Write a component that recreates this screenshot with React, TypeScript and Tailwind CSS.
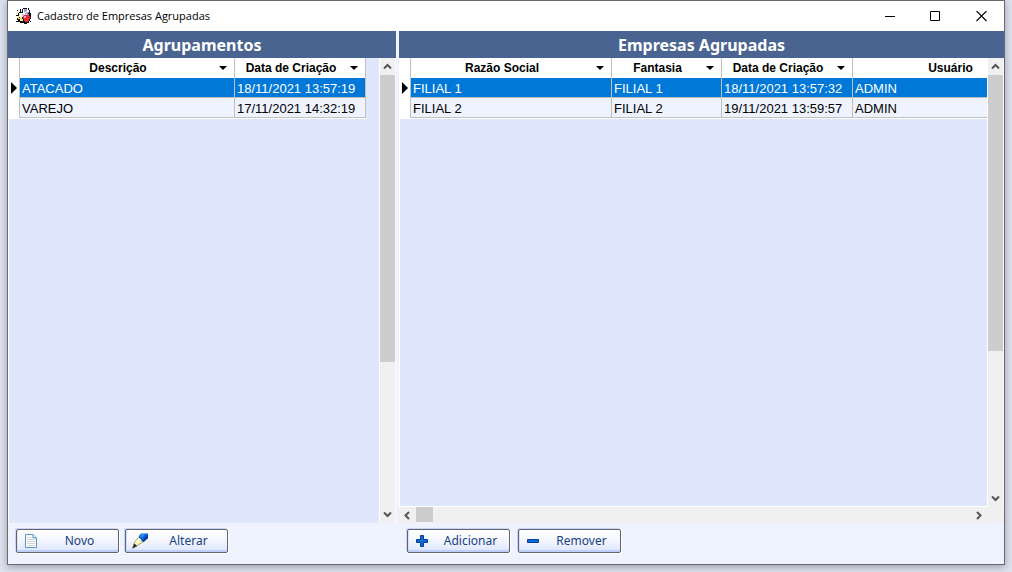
import type { ReactNode } from "react";

type Column = { label: string; width: number; sortable?: boolean };

type GridProps = { columns: Column[]; rows: string[][]; label: string };

function Grid({ columns, rows, label }: GridProps) {
  const total = 11 + columns.reduce((sum, c) => sum + c.width, 0);
  return (
    <table
      aria-label={label}
      className="table-fixed border-separate border-spacing-0 border-b border-white text-[13px] leading-4"
      style={{ width: total }}
    >
      <colgroup>
        <col style={{ width: 11 }} />
        {columns.map((c) => (
          <col key={c.label} style={{ width: c.width }} />
        ))}
      </colgroup>
      <thead>
        <tr className="h-5 bg-white text-xs">
          <td className="border-r border-[#c0c0c0] p-0" />
          {columns.map((c) => (
            <th key={c.label} scope="col" className="border-r border-[#c0c0c0] p-0 font-bold">
              <div className="flex h-5 items-center pr-1">
                <span className="flex-1 text-center">{c.label}</span>
                <span className="flex w-3.5 justify-center">
                  {c.sortable !== false && (
                    <svg width="8" height="4" viewBox="0 0 8 4" aria-hidden="true">
                      <path d="M0 0h8L4 4z" />
                    </svg>
                  )}
                </span>
              </div>
            </th>
          ))}
        </tr>
      </thead>
      <tbody>
        {rows.map((row, i) => (
          <tr key={row[0]} className="h-5">
            <td className="border-r border-[#c0c0c0] bg-white p-0">
              {i === 0 && (
                <svg className="ml-0.5 block" width="6" height="12" viewBox="0 0 6 12" aria-hidden="true">
                  <path d="M0 0l6 6L0 12z" />
                </svg>
              )}
            </td>
            {row.map((cell, j) => (
              <td
                key={j}
                className={
                  i === 0
                    ? "border-r border-b border-[#c0c0c0] bg-[#0078d7] p-0 pt-0.5 pl-px whitespace-nowrap text-white first-of-type:border-l"
                    : "border-r border-b border-[#c0c0c0] bg-[#eff3ff] p-0 pt-0.5 pl-px whitespace-nowrap text-black"
                }
              >
                <span className="pl-px">{cell}</span>
              </td>
            ))}
          </tr>
        ))}
      </tbody>
    </table>
  );
}

function Chevron({ d }: { d: string }) {
  return (
    <svg width="9" height="9" viewBox="0 0 9 9" fill="none" stroke="#555" strokeWidth="2" aria-hidden="true">
      <path d={d} />
    </svg>
  );
}

function VerticalScroll({ thumb }: { thumb: string }) {
  return (
    <div className="flex w-4 shrink-0 flex-col border-r border-[#f8faff] bg-[#f0f0f0]">
      <button type="button" aria-label="Rolar para cima" className="flex h-[17px] items-center justify-center">
        <Chevron d="M1 6.5L4.5 3 8 6.5" />
      </button>
      <div className="min-h-0 flex-1">
        <div className="bg-[#cdcdcd]" style={{ height: thumb }} />
      </div>
      <button type="button" aria-label="Rolar para baixo" className="flex h-[17px] items-center justify-center">
        <Chevron d="M1 2.5L4.5 6 8 2.5" />
      </button>
    </div>
  );
}

function HorizontalScroll() {
  return (
    <div className="flex h-4 shrink-0 bg-[#f0f0f0] pr-4">
      <button type="button" aria-label="Rolar para a esquerda" className="flex w-[17px] items-center justify-center">
        <Chevron d="M6 1L2.500 4.500 6 8" />
      </button>
      <div className="flex-1">
        <div className="h-[15px] w-[17px] bg-[#cdcdcd]" />
      </div>
      <button type="button" aria-label="Rolar para a direita" className="flex w-[17px] items-center justify-center">
        <Chevron d="M2 1l3.500 3.500L2 8" />
      </button>
    </div>
  );
}

function PanelTitle({ children }: { children: ReactNode }) {
  return (
    <h2 className="h-[27px] shrink-0 bg-[#4a6492] text-center font-['Noto_Sans',sans-serif] text-base leading-7 font-bold text-white">
      {children}
    </h2>
  );
}

function ActionButton({ icon, children }: { icon: ReactNode; children: ReactNode }) {
  return (
    <button
      type="button"
      className="flex h-6 w-[103px] items-center rounded-xs border border-[#63636b] bg-linear-to-b from-white via-[#f3f6ff] to-[#dce5ff] pl-1.5 font-['Noto_Sans',sans-serif] text-xs leading-4 text-[#17407f] shadow-[inset_0_-2px_0_#c0cffa,inset_1px_0_0_#d6e0ff,-1px_-1px_0_#c9d4f8,1px_1px_0_#ffffff]"
    >
      <span className="flex w-4 shrink-0 justify-center">{icon}</span>
      <span className="flex-1 pl-0.5 text-center">{children}</span>
    </button>
  );
}

function AppIcon() {
  return (
    <svg width="16" height="16" viewBox="0 0 16 16" shapeRendering="crispEdges" aria-hidden="true">
      <path fill="#111" d="M1 2h1v1H1zM4 1h1v3H4zM7 0h4v1H7zM6 1h1v3H6zM12 0h1v2h-1zM13 2h1v3h1v6h-1v2h-1v2h-2v1H8v-1H4v-1H2v-2H1v-2h1V8H0V7h2V5h1V4h10z" />
      <path fill="#f4e65c" d="M3 5h3v2H3zM2 8h2v3H2zM4 10h3v3H4zM1 4h1v1H1z" />
      <path fill="#fff" d="M4 5h3v5H4zM7 3h2v4H7zM3 7h2v2H3zM5 12h2v1H5z" />
      <path fill="#9298d8" d="M8 1h3v3H8zM10 4h3v3h-3z" />
      <path fill="#c8c8d0" d="M9 3h2v4H9zM6 6h2v2H6z" />
      <path fill="#e62c3c" d="M8 7h5v1h1v3h-1v2h-1v1H9v-1H8v-2H7V8h1z" />
      <path fill="#ff9aa0" d="M8 8h2v2H8z" />
      <path fill="#111" d="M12 5h1v1h-1zM6 9h1v2H6zM3 9h1v1H3zM0 13h2v1H0zM14 13h1v1h-1z" />
    </svg>
  );
}

function PageIcon() {
  return (
    <svg width="12" height="14" viewBox="0 0 12 14" aria-hidden="true">
      <path fill="#fff" stroke="#5594ca" d="M.5.500h7.500l3.500 3.500v9.500H.5z" />
      <path fill="#d5e9fa" stroke="#5594ca" d="M8 .500v3.500h3.500" />
      <path stroke="#d4d4d8" d="M2 3.500h4M2 5.500h7M2 7.500h8M2 9.500h8M2 11.500h8" />
    </svg>
  );
}

function PencilIcon() {
  return (
    <svg width="16" height="16" viewBox="0 0 16 16" aria-hidden="true">
      <path fill="#f7f3a5" stroke="#77733d" strokeWidth=".6" d="M7 3.500L2.500 9.500.8 15l5-2.800L12.500 8z" />
      <path fill="#fffde0" d="M7 5l2 1.500-5 5L3 10z" />
      <path fill="#333" d="M2 10.800L.3 15.700l4.700-2.500-1.200-1.700z" />
      <path fill="#0a62d8" d="M7 3l2-2.500h7V5l-4.500 4-2-1-.5-2-2-1z" />
      <path fill="#2d92ef" d="M8 3.500L9.500 1H13l-2.500 3.500z" />
      <path fill="#063a98" d="M12.500 5L16 2v3l-4.500 4-1-1z" />
    </svg>
  );
}

export default function App() {
  return (
    <div className="flex h-screen flex-col bg-[#dfe2ef] px-[7px] pb-[7px] font-['Liberation_Sans',Arial,sans-serif] text-black">
      <div className="flex min-h-0 flex-1 flex-col border border-[#686870] bg-[#eff3ff] shadow-[0_2px_8px_rgba(50,50,70,0.4)]">
        <header className="flex h-[30px] shrink-0 items-center bg-white pl-2">
          <AppIcon />
          <h1 className="flex-1 pl-[5px] font-['Open_Sans','Noto_Sans',sans-serif] text-[11px]">
            Cadastro de Empresas Agrupadas
          </h1>
          <button type="button" aria-label="Minimizar" className="flex h-full w-[46px] items-center justify-center">
            <svg width="11" height="11" viewBox="0 0 11 11" aria-hidden="true">
              <path stroke="#000" d="M1 5.500h10" />
            </svg>
          </button>
          <button type="button" aria-label="Maximizar" className="flex h-full w-[46px] items-center justify-center">
            <svg width="11" height="11" viewBox="0 0 11 11" aria-hidden="true">
              <path fill="none" stroke="#000" d="M.5 .500h9v9h-9z" />
            </svg>
          </button>
          <button type="button" aria-label="Fechar" className="flex h-full w-[46px] items-center justify-center">
            <svg width="11" height="11" viewBox="0 0 11 11" aria-hidden="true">
              <path stroke="#000" strokeWidth="1.100" d="M.5 0l10 10M10.500 0l-10 10" />
            </svg>
          </button>
        </header>
        <main className="flex min-h-0 flex-1 gap-[3px]">
          <section className="flex w-[388px] shrink-0 flex-col">
            <PanelTitle>Agrupamentos</PanelTitle>
            <div className="flex min-h-0 flex-1">
              <div className="min-w-0 flex-1 overflow-hidden border-x border-white bg-[#dfe7fd]">
                <Grid
                  label="Agrupamentos"
                  columns={[
                    { label: "Descrição", width: 215 },
                    { label: "Data de Criação", width: 131 },
                  ]}
                  rows={[
                    ["ATACADO", "18/11/2021 13:57:19"],
                    ["VAREJO", "17/11/2021 14:32:19"],
                  ]}
                />
              </div>
              <VerticalScroll thumb="66.5%" />
            </div>
            <div className="flex h-[41px] shrink-0 items-start gap-1.5 pt-1.5 pl-2">
              <ActionButton icon={<PageIcon />}>Novo</ActionButton>
              <ActionButton icon={<PencilIcon />}>Alterar</ActionButton>
            </div>
          </section>
          <section className="flex min-w-0 flex-1 flex-col">
            <PanelTitle>Empresas Agrupadas</PanelTitle>
            <div className="flex min-h-0 flex-1">
              <div className="min-w-0 flex-1 overflow-hidden border-x border-b border-white bg-[#dfe7fd]">
                <Grid
                  label="Empresas Agrupadas"
                  columns={[
                    { label: "Razão Social", width: 201 },
                    { label: "Fantasia", width: 110 },
                    { label: "Data de Criação", width: 131 },
                    { label: "Usuário", width: 214 },
                  ]}
                  rows={[
                    ["FILIAL 1", "FILIAL 1", "18/11/2021 13:57:32", "ADMIN"],
                    ["FILIAL 2", "FILIAL 2", "19/11/2021 13:59:57", "ADMIN"],
                  ]}
                />
              </div>
              <VerticalScroll thumb="66.5%" />
            </div>
            <HorizontalScroll />
            <div className="flex h-[41px] shrink-0 items-start gap-2 pt-1.5 pl-2">
              <ActionButton
                icon={
                  <svg width="12" height="12" viewBox="0 0 12 12" aria-hidden="true">
                    <path fill="#0a6ad8" stroke="#063f9c" d="M4.500.500h3v4h4v3h-4v4h-3v-4h-4v-3h4z" />
                  </svg>
                }
              >
                Adicionar
              </ActionButton>
              <ActionButton
                icon={
                  <svg width="12" height="4" viewBox="0 0 12 4" aria-hidden="true">
                    <path fill="#0a6ad8" stroke="#063f9c" d="M.5.500h11v3H.5z" />
                  </svg>
                }
              >
                Remover
              </ActionButton>
            </div>
          </section>
        </main>
      </div>
    </div>
  );
}
